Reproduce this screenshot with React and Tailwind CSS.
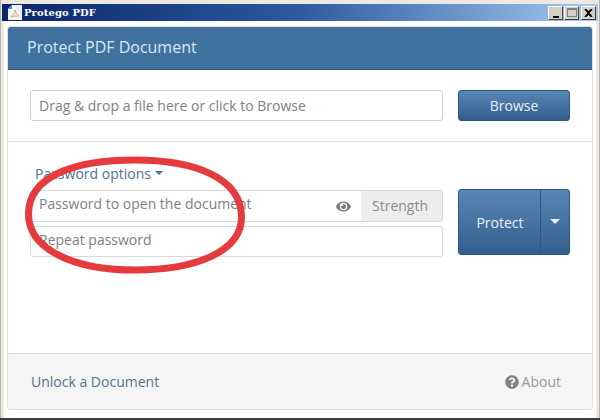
import React from "react";
import { FaEye, FaQuestionCircle } from "react-icons/fa";

const font = { sans: "font-['Open_Sans','Noto_Sans',sans-serif]" };

const TitleBar = () => (
  <div className="h-[17px] mx-[1px] flex items-center justify-between bg-gradient-to-r from-[#0a246a] via-[#2f5a9e] to-[#a6caf0]">
    <div className="flex items-center">
      <svg width="16" height="16" viewBox="0 0 16 16" className="ml-[5px]">
        <path d="M1 15V4l4-4h10v15z" fill="#eef2f6" />
        <path d="M1 4l4-4v4z" fill="#5b8fd0" />
        <path d="M4 12c2-1 4-4 4-7 1 3 2 5 4 6-3 0-5 0-8 1z" fill="none" stroke="#e0b060" strokeWidth="1" />
      </svg>
      <span className="ml-[1px] font-['DejaVu_Serif',serif] font-bold text-white text-[10px] tracking-[0.1px] leading-none">Protego PDF</span>
    </div>
    <div className="flex items-center gap-0 mr-[2px]">
      <div className="w-[15px] h-[14px] bg-[#d4d0c8] border border-t-white border-l-white border-b-[#404040] border-r-[#404040] flex items-end justify-center pb-[1px]">
        <div className="w-[6px] h-[2px] bg-black" />
      </div>
      <div className="ml-[1px] w-[15px] h-[14px] bg-[#d4d0c8] border border-t-white border-l-white border-b-[#404040] border-r-[#404040] flex items-center justify-center">
        <div className="w-[10px] h-[9px] border border-[#808080] border-t-2" />
      </div>
      <div className="ml-[2px] w-[15px] h-[14px] bg-[#d4d0c8] border border-t-white border-l-white border-b-[#404040] border-r-[#404040] flex items-center justify-center">
        <svg width="9" height="8" viewBox="0 0 9 8">
          <path d="M1 0l3.5 3L8 0M1 8l3.5-3L8 8M1 0l7 8M8 0L1 8" stroke="#000" strokeWidth="1.6" fill="none" />
        </svg>
      </div>
    </div>
  </div>
);

const blueBtn = "bg-gradient-to-b from-[#5a86b5] to-[#335f8f] border border-[#2e5682] text-[#e8f0f7]";

export default function App() {
  return (
    <div className={`relative w-[600px] h-[420px] overflow-hidden bg-[#ece9e2] ${font.sans}`}>
      <div className="h-[418px] pt-[4px] border-x-[1px] border-[#b8b4ac] flex flex-col">
        <TitleBar />
        <div className="flex-1 bg-white px-[3px] pt-[5px] pb-[8px] mx-0 border-x-[3px] border-x-[#ece9e2]">
          <div className="h-full flex flex-col border border-[#ddd] rounded-[4px] overflow-hidden bg-white">
            <div className="h-[43px] shrink-0 bg-[#41719f] border-b border-[#2e5682] flex items-center pl-[19px] pb-[2px]">
              <span className="text-[16px] font-normal text-[#dbe8f3]">Protect PDF Document</span>
            </div>

            <div className="h-[72px] shrink-0 flex items-center justify-between pl-[22px] pr-[22px] border-b border-[#e2e2e2]">
              <div className="w-[413px] h-[31px] border border-[#d0d0d0] rounded-[3px] flex items-center pl-[8px] text-[14px] text-[#808080]">
                Drag &amp; drop a file here or click to Browse
              </div>
              <button className={`w-[112px] h-[31px] rounded-[3px] text-[14px] font-medium ${blueBtn}`}>Browse</button>
            </div>

            <div className="flex-1 pl-[22px] pr-[22px] pt-[21px]">
              <div className="flex justify-between">
                <div className="w-[413px]">
                  <div className="h-[20px] pl-[5px] flex items-center text-[14px] text-[#4f7196]">
                    Password options
                    <span className="ml-[4px] w-0 h-0 border-x-[4px] border-x-transparent border-t-[4px] border-t-[#4f7196]" />
                  </div>
                  <div className="mt-[7px] h-[32px] border border-[#d8d8d8] rounded-[3px] flex items-center overflow-hidden">
                    <span className="flex-1 pl-[8px] pb-[5px] text-[14px] text-[#808080]">Password to open the document</span>
                    <FaEye className="text-[#7a7a7a] text-[15px] mr-[10px] -ml-[1px]" />
                    <span className="w-[81px] h-full bg-[#eeeeee] flex items-center pl-[11px] pb-[1px] text-[14px] text-[#8a8a8a]">Strength</span>
                  </div>
                  <div className="mt-[4px] h-[31px] border border-[#d8d8d8] rounded-[3px] flex items-center pl-[8px] pb-[4px] text-[14px] text-[#808080]">
                    Repeat password
                  </div>
                </div>
                <div className={`mt-[26px] w-[112px] h-[66px] rounded-[3px] flex text-[14px] font-medium ${blueBtn}`}>
                  <span className="flex-1 flex items-center justify-center pl-[1px]">Protect</span>
                  <span className="w-[29px] border-l border-[#2e5682] flex items-center justify-center pb-[2px]">
                    <span className="w-0 h-0 border-x-[5px] border-x-transparent border-t-[5px] border-t-[#e8f0f7]" />
                  </span>
                </div>
              </div>
            </div>

            <div className="h-[56px] shrink-0 bg-[#f5f5f5] border-t border-[#ddd] flex items-center justify-between pl-[23px] pr-[31px]">
              <span className="text-[14px] text-[#4f7196]">Unlock a Document</span>
              <span className="flex items-center text-[14px] text-[#999]">
                <FaQuestionCircle className="text-[#808080] text-[14px] mr-[3px]" />
                About
              </span>
            </div>
          </div>
        </div>
      </div>
      <div className="h-[2px] bg-[#404040]" />

      {/* red ellipse drawn over the screenshot */}
      <svg width="600" height="420" className="absolute left-0 top-0 pointer-events-none">
        <path
          d="M28.5 214C28.5 176 75 160 135 160C195 160 241.5 178 241.5 217C241.5 252 195 270 135 270C75 270 28.5 250 28.5 214Z"
          fill="none"
          stroke="#e53a3e"
          strokeWidth="7"
        />
      </svg>
    </div>
  );
}
